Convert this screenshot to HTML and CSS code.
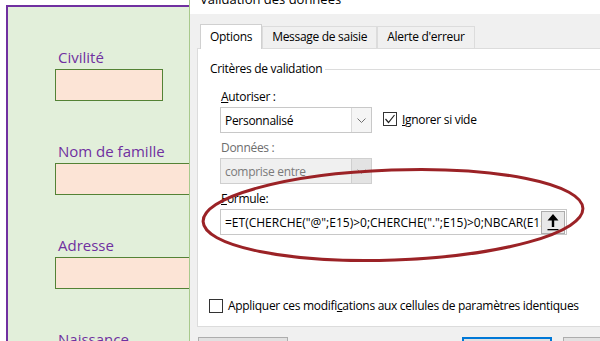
FILE: index.html
```html
<!DOCTYPE html>
<html lang="fr">
<head>
  <meta charset="UTF-8" />
  <title>Validation des données</title>
  <link rel="stylesheet" href="styles.css">
</head>
<body>
  <div class="sheet">
    <div class="form">
      <div class="field">
        <div class="label">Civilité</div>
        <div class="cell short"></div>
      </div>
      <div class="field">
        <div class="label">Nom de famille</div>
        <div class="cell"></div>
      </div>
      <div class="field">
        <div class="label">Adresse</div>
        <div class="cell"></div>
      </div>
      <div class="field">
        <div class="label">Naissance</div>
        <div class="cell"></div>
      </div>
    </div>
  </div>

  <div class="dialog">
    <div class="title"><span>Validation des données</span></div>
    <div class="tabs">
      <div class="tab active">Options</div>
      <div class="tab">Message de saisie</div>
      <div class="tab">Alerte d'erreur</div>
    </div>
    <div class="panel">
      <div class="group"><span>Critères de validation</span><i></i></div>

      <div class="label-sm first"><u>A</u>utoriser :</div>
      <div class="row">
        <div class="combo">
          <span>Personnalisé</span>
          <b><svg width="9" height="5" viewBox="0 0 9 5"><polyline points="0.5,0.5 4.5,4.5 8.5,0.5" fill="none" stroke="#707070"/></svg></b>
        </div>
        <label class="check">
          <span class="box"><svg width="12" height="12" viewBox="0 0 12 12"><polyline points="1.5,6 4.5,9.5 10.5,2" fill="none" stroke="#222" stroke-width="1.2"/></svg></span>
          <span><u>I</u>gnorer si vide</span>
        </label>
      </div>

      <div class="label-sm muted">Données :</div>
      <div class="combo disabled">
        <span>comprise entre</span>
        <b><svg width="9" height="5" viewBox="0 0 9 5"><polyline points="0.5,0.5 4.5,4.5 8.5,0.5" fill="none" stroke="#9a9a9a"/></svg></b>
      </div>

      <div class="label-sm"><u>F</u>ormule:</div>
      <div class="formula">
        <div class="expr">=ET(CHERCHE("@";E15)&gt;0;CHERCHE(".";E15)&gt;0;NBCAR(E15)&gt;5)</div>
        <div class="pick">
          <svg width="14" height="18" viewBox="0 0 14 18">
            <polygon points="7,1 1.5,7.5 5.8,7.5 5.8,14 8.2,14 8.2,7.5 12.5,7.5" fill="#000"/>
            <rect x="1.5" y="16" width="11" height="1.3" fill="#000"/>
          </svg>
        </div>
      </div>

      <label class="check apply">
        <span class="box"></span>
        <span>Appliquer ces modifi<u>c</u>ations aux cellules de paramètres identiques</span>
      </label>
    </div>
    <div class="buttons">
      <div class="btn"></div>
      <div class="spacer"></div>
      <div class="btn default"></div>
      <div class="btn"></div>
    </div>
  </div>

  <svg class="circle" width="600" height="341" viewBox="0 0 600 341">
    <ellipse cx="393" cy="215" rx="190" ry="45" transform="rotate(-2 393 215)" fill="none" stroke="#9b2226" stroke-width="3"/>
  </svg>
</body>
</html>
```

FILE: styles.css
```css
:root {
  --purple: #7030a0;
  --sheet: #e2efda;
  --cell: #fce4d6;
  --cell-border: #548235;
  --dlg: #f0f0f0;
  --line: #dcdcdc;
}
* {
  box-sizing: border-box;
}
body {
  margin: 0;
  width: 600px;
  height: 341px;
  overflow: hidden;
  display: flex;
  background: #fff;
  position: relative;
  font-family: "Open Sans", sans-serif;
}

/* feuille excel */
.sheet {
  width: 189px;
  flex: none;
  padding: 5px 0 0 6px;
  overflow: hidden;
}
.form {
  height: 100%;
  background: var(--sheet);
  border-top: 2px solid var(--purple);
  border-left: 2px solid var(--purple);
  padding: 41px 0 0 47px;
  display: flex;
  flex-direction: column;
  gap: 41px;
  overflow: hidden;
}
.field {
  flex: none;
}
.label {
  color: var(--purple);
  font-size: 15px;
  line-height: 18px;
  padding-left: 3px;
  margin-bottom: 3px;
  white-space: nowrap;
}
.cell {
  height: 32px;
  width: 160px;
  background: var(--cell);
  border: 1.5px solid var(--cell-border);
}
.cell.short {
  width: 108px;
}

/* boite de dialogue */
.dialog {
  flex: 1;
  background: var(--dlg);
  border-left: 1px solid #a8c98c;
  font-size: 12px;
  letter-spacing: -0.3px;
  color: #000;
  display: flex;
  flex-direction: column;
  min-width: 0;
  overflow: hidden;
}
.dialog > * {
  flex: none;
}
.title {
  height: 14px;
  background: #fff;
  overflow: hidden;
  padding-left: 10px;
}
.title span {
  display: block;
  font-size: 13px;
  line-height: 18px;
  letter-spacing: 0;
  margin-top: -10px;
  color: #000;
}
.tabs {
  display: flex;
  align-items: flex-end;
  padding: 9px 0 0 10px;
  height: 34px;
}
.tab {
  height: 22px;
  padding: 0 9px;
  line-height: 20px;
  border: 1px solid var(--line);
  border-bottom: none;
  background: var(--dlg);
  white-space: nowrap;
}
.tab.active {
  height: 25px;
  padding-top: 2px;
  background: #fff;
  border-color: #d0d0d0;
  position: relative;
  top: 1px;
}
.panel {
  margin-left: 7px;
  height: 279px;
  background: #fff;
  border: 1px solid var(--line);
  border-right: none;
  padding: 12px 0 0 12px;
  display: flex;
  flex-direction: column;
}
.group {
  display: flex;
  align-items: center;
  gap: 3px;
  line-height: 16px;
}
.group i {
  flex: 1;
  height: 1px;
  background: var(--line);
}
.label-sm {
  margin: 7px 0 0 11px;
  line-height: 16px;
}
.label-sm.first {
  margin-top: 12px;
}
.muted {
  color: #6d6d6d;
}
.row {
  display: flex;
  align-items: center;
  gap: 11px;
}
.combo {
  margin: 2px 0 0 10px;
  width: 152px;
  height: 26px;
  border: 1px solid #c8c8c8;
  display: flex;
  align-items: center;
  background: #fff;
}
.combo span {
  flex: 1;
  padding-left: 4px;
}
.combo b {
  width: 20px;
  height: 100%;
  border-left: 1px solid #dadada;
  display: flex;
  align-items: center;
  justify-content: center;
  background: #f5f5f5;
}
.combo.disabled {
  background: #f0f0f0;
  border-color: #cfcfcf;
  color: #7a7a7a;
}
.combo.disabled b {
  background: #e3e3e3;
  border-color: #cfcfcf;
}
.check {
  display: flex;
  align-items: center;
  gap: 5px;
}
.box {
  width: 14px;
  height: 14px;
  border: 1px solid #333;
  background: #fff;
  display: flex;
  align-items: center;
  justify-content: center;
}
.formula {
  margin: 2px 0 0 10px;
  width: 347px;
  height: 26px;
  border: 1px solid #c8c8c8;
  display: flex;
  align-items: center;
  padding-right: 1px;
}
.expr {
  flex: 1;
  overflow: hidden;
  white-space: nowrap;
  padding-left: 4px;
  letter-spacing: 0;
}
.pick {
  width: 24px;
  height: 23px;
  background: #e8e8e8;
  border: 1px solid #adadad;
  display: flex;
  align-items: center;
  justify-content: center;
}
.apply {
  margin: 62px 0 0 -1px;
}
.buttons {
  display: flex;
  gap: 11px;
  padding: 10px 0 0 8px;
}
.buttons > * {
  flex: none;
}
.btn {
  width: 90px;
  height: 24px;
  border: 1px solid #adadad;
  background: #e1e1e1;
}
.btn.default {
  border: 2px solid #0078d7;
}
.spacer {
  width: 152px;
}
.circle {
  position: absolute;
  left: 0;
  top: 0;
  pointer-events: none;
}
```
